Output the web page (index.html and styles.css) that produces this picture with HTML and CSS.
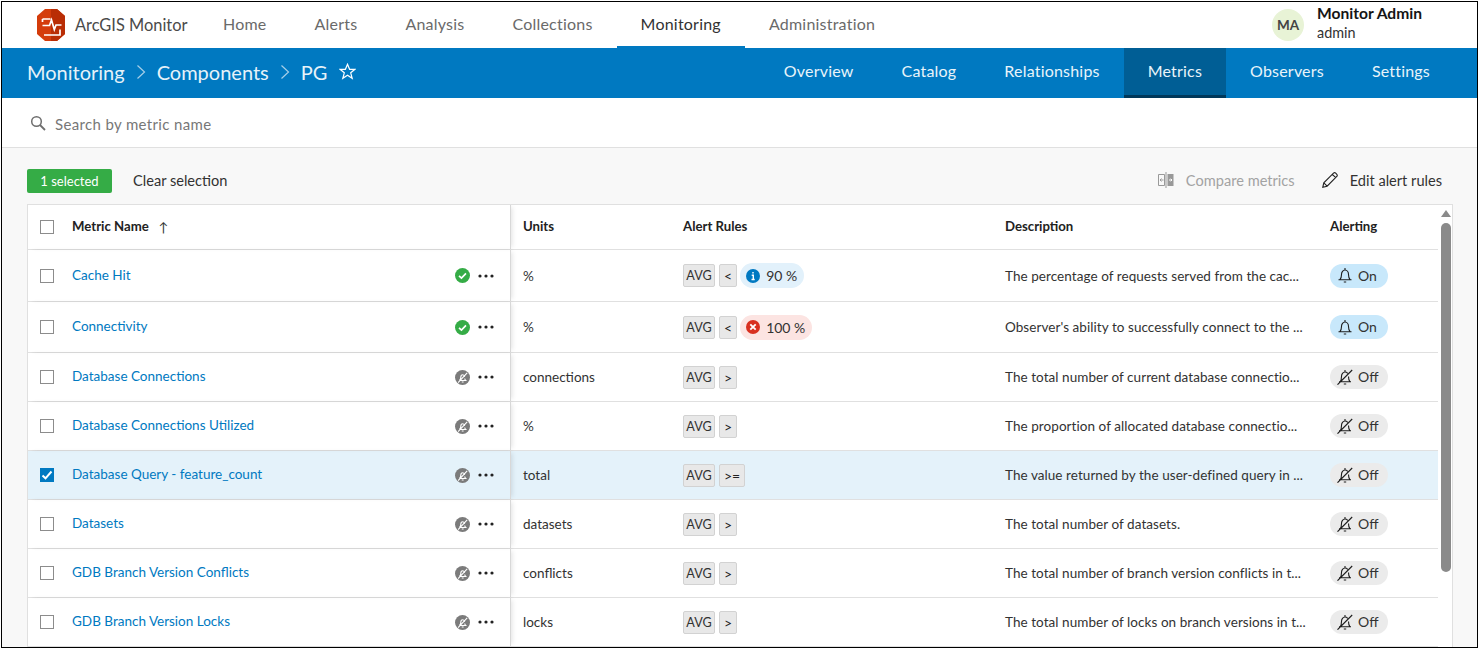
FILE: index.html
```html
<!DOCTYPE html>
<html lang="en">
<head>
<meta charset="utf-8">
<title>ArcGIS Monitor</title>
<link rel="stylesheet" href="styles.css">
</head>
<body>
<svg class="defs" width="0" height="0" aria-hidden="true">
  <symbol id="check" viewBox="0 0 16 16"><circle cx="8" cy="8" r="8" fill="#35ac46"/><path d="M4.3 8.300l2.600 2.500 4.800-5" fill="none" stroke="#fff" stroke-width="1.800"/></symbol>
  <symbol id="muted" viewBox="0 0 16 16"><circle cx="8" cy="8" r="8" fill="#7b7b7b"/><path d="M4.800 11.200c1-1 1.400-2 1.400-3.400 0-1.400.8-2.700 2-2.700s2 .9 2.100 2.200M10.400 9c.1.9.4 1.600 1 2.200H4.800M7.200 12.800h2M3.300 13.400L13 3" fill="none" stroke="#fff" stroke-width="1.200"/></symbol>
  <symbol id="more" viewBox="0 0 16 4"><circle cx="2" cy="2" r="1.600" fill="#222"/><circle cx="8" cy="2" r="1.600" fill="#222"/><circle cx="14" cy="2" r="1.600" fill="#222"/></symbol>
  <symbol id="bell" viewBox="0 0 16 16"><path d="M1.500 12.800h13M2.800 12.800c1.400-1.300 1.700-2.800 1.700-5.300C4.500 5 6 3 8 3s3.500 2 3.500 4.500c0 2.500.3 4 1.700 5.300M8 1V3M6.800 15h2.400" fill="none" stroke="#1c1c1c" stroke-width="1.100"/></symbol>
  <symbol id="bell-off" viewBox="0 0 16 16"><path d="M2 12.800h12M3 12.800c1.300-1.300 1.500-2.800 1.500-5.300C4.500 5 6 3 8 3c1.100 0 2 .5 2.700 1.300M11.500 7.500c0 2.500.3 4 1.500 5.300M8 1V3M6.800 15h2.400M.5 15.700L15.200 1" fill="none" stroke="#1c1c1c" stroke-width="1.100"/></symbol>
  <symbol id="tick" viewBox="0 0 14 14"><path d="M2.500 7.500l3 2.800 6-6.800" fill="none" stroke="#fff" stroke-width="2"/></symbol>
</svg>
<div class="frame">
  <header class="topbar">
    <a class="brand">
      <svg class="logo" width="28" height="32" viewBox="0 0 28 32"><path d="M8 0h12l8 7v18l-8 7H8l-8-7V7z" fill="#d43c0b"/><path d="M14 0h6l8 7v18l-8 7h-6z" fill="#b92d05"/><path d="M5.500 16.500h7l2-5.500 2.800 9.500 1.700-4.500h5.500M5.500 10h8M5.500 10v3M7 26h16v-5.500" fill="none" stroke="#fff" stroke-width="1.700"/></svg>
      <span>ArcGIS Monitor</span>
    </a>
    <nav class="mainnav">
      <a>Home</a><a>Alerts</a><a>Analysis</a><a>Collections</a><a class="active">Monitoring</a><a>Administration</a>
    </nav>
    <div class="user">
      <span class="avatar">MA</span>
      <span class="userinfo"><b>Monitor Admin</b><span>admin</span></span>
    </div>
  </header>

  <div class="bluebar">
    <div class="crumbs">
      <a>Monitoring</a><svg class="chev" width="10" height="16" viewBox="0 0 10 16"><path d="M1.500 1.500L8.500 8l-7 6.500" fill="none" stroke="#a6cfe8" stroke-width="1.200"/></svg>
      <a>Components</a><svg class="chev" width="10" height="16" viewBox="0 0 10 16"><path d="M1.500 1.500L8.500 8l-7 6.500" fill="none" stroke="#a6cfe8" stroke-width="1.200"/></svg>
      <a>PG</a>
      <svg class="star" width="17" height="17" viewBox="0 0 17 17"><path d="M8.500 1.300l2.100 5h5.300l-4.200 3.500 1.500 5.500-4.700-3-4.700 3 1.500-5.500L1.100 6.300h5.300z" fill="none" stroke="#fff" stroke-width="1.200"/></svg>
    </div>
    <nav class="subnav">
      <a>Overview</a><a>Catalog</a><a>Relationships</a><a class="active">Metrics</a><a>Observers</a><a>Settings</a>
    </nav>
  </div>

  <div class="searchbar">
    <svg width="16" height="16" viewBox="0 0 16 16"><circle cx="6.500" cy="6.500" r="4.800" fill="none" stroke="#6e6e6e" stroke-width="1.500"/><path d="M10 10l5 5" stroke="#6e6e6e" stroke-width="1.800"/></svg>
    <span>Search by metric name</span>
  </div>

  <main class="content">
    <div class="toolbar">
      <span class="selected">1 selected</span>
      <a class="clear">Clear selection</a>
      <a class="tool disabled">
        <svg width="16" height="16" viewBox="0 0 16 16"><path d="M.500 2.500h6v11h-6z" fill="none" stroke="#999"/><path d="M9.500 2h6v12h-6z" fill="#999"/><path d="M8 0v16" stroke="#999"/><path d="M2 8h3.500M2 8l1.500-1.500M2 8l1.500 1.500" fill="none" stroke="#999"/><path d="M11 8h3M14 8l-1.300-1.300M14 8l-1.300 1.300" fill="none" stroke="#fff"/></svg>
        <span>Compare metrics</span>
      </a>
      <a class="tool">
        <svg width="16" height="16" viewBox="0 0 16 16"><path d="M.800 15.200l1-4.400L11.500 1.100c.7-.6 1.600-.5 2.200.1l1.100 1.100c.6.700.6 1.500 0 2.200l-9.700 9.700zM1.800 10.800l3.400 3.400M10.300 2.300l3.400 3.400" fill="none" stroke="#222" stroke-width="1.100"/></svg>
        <span>Edit alert rules</span>
      </a>
    </div>

    <section class="table">
      <div class="rows">
        <div class="row head">
          <div class="name"><i class="box"></i><b>Metric Name</b><span class="sort">↑</span></div>
          <div class="cell"><b>Units</b></div>
          <div class="cell"><b>Alert Rules</b></div>
          <div class="cell"><b>Description</b></div>
          <div class="cell"><b>Alerting</b></div>
        </div>

        <div class="row tall">
          <div class="name"><i class="box"></i><a>Cache Hit</a><svg class="status"><use href="#check"/></svg><svg class="more"><use href="#more"/></svg></div>
          <div class="cell">%</div>
          <div class="cell rules"><span class="tag">AVG</span><span class="tag op">&lt;</span>
            <span class="level info"><svg width="14" height="14" viewBox="0 0 14 14"><circle cx="7" cy="7" r="7" fill="#0079c1"/><path d="M7 3v1.600M5.700 6.300H7.300V10.300M5.500 10.500h3.200" fill="none" stroke="#fff" stroke-width="1.400"/></svg>90 %</span></div>
          <div class="cell desc">The percentage of requests served from the cac...</div>
          <div class="cell"><span class="pill on"><svg><use href="#bell"/></svg>On</span></div>
        </div>

        <div class="row mid">
          <div class="name"><i class="box"></i><a>Connectivity</a><svg class="status"><use href="#check"/></svg><svg class="more"><use href="#more"/></svg></div>
          <div class="cell">%</div>
          <div class="cell rules"><span class="tag">AVG</span><span class="tag op">&lt;</span>
            <span class="level crit"><svg width="14" height="14" viewBox="0 0 14 14"><circle cx="7" cy="7" r="7" fill="#d83020"/><path d="M4.300 4.300l5.400 5.400M9.700 4.300l-5.400 5.400" fill="none" stroke="#fff" stroke-width="1.800"/></svg>100 %</span></div>
          <div class="cell desc">Observer's ability to successfully connect to the ...</div>
          <div class="cell"><span class="pill on"><svg><use href="#bell"/></svg>On</span></div>
        </div>

        <div class="row">
          <div class="name"><i class="box"></i><a>Database Connections</a><svg class="status"><use href="#muted"/></svg><svg class="more"><use href="#more"/></svg></div>
          <div class="cell">connections</div>
          <div class="cell rules"><span class="tag">AVG</span><span class="tag op">&gt;</span></div>
          <div class="cell desc">The total number of current database connectio...</div>
          <div class="cell"><span class="pill"><svg><use href="#bell-off"/></svg>Off</span></div>
        </div>

        <div class="row">
          <div class="name"><i class="box"></i><a>Database Connections Utilized</a><svg class="status"><use href="#muted"/></svg><svg class="more"><use href="#more"/></svg></div>
          <div class="cell">%</div>
          <div class="cell rules"><span class="tag">AVG</span><span class="tag op">&gt;</span></div>
          <div class="cell desc">The proportion of allocated database connectio...</div>
          <div class="cell"><span class="pill"><svg><use href="#bell-off"/></svg>Off</span></div>
        </div>

        <div class="row picked">
          <div class="name"><i class="box on"><svg width="14" height="14"><use href="#tick"/></svg></i><a>Database Query - feature_count</a><svg class="status"><use href="#muted"/></svg><svg class="more"><use href="#more"/></svg></div>
          <div class="cell">total</div>
          <div class="cell rules"><span class="tag">AVG</span><span class="tag op">&gt;=</span></div>
          <div class="cell desc">The value returned by the user-defined query in ...</div>
          <div class="cell"><span class="pill"><svg><use href="#bell-off"/></svg>Off</span></div>
        </div>

        <div class="row">
          <div class="name"><i class="box"></i><a>Datasets</a><svg class="status"><use href="#muted"/></svg><svg class="more"><use href="#more"/></svg></div>
          <div class="cell">datasets</div>
          <div class="cell rules"><span class="tag">AVG</span><span class="tag op">&gt;</span></div>
          <div class="cell desc">The total number of datasets.</div>
          <div class="cell"><span class="pill"><svg><use href="#bell-off"/></svg>Off</span></div>
        </div>

        <div class="row">
          <div class="name"><i class="box"></i><a>GDB Branch Version Conflicts</a><svg class="status"><use href="#muted"/></svg><svg class="more"><use href="#more"/></svg></div>
          <div class="cell">conflicts</div>
          <div class="cell rules"><span class="tag">AVG</span><span class="tag op">&gt;</span></div>
          <div class="cell desc">The total number of branch version conflicts in t...</div>
          <div class="cell"><span class="pill"><svg><use href="#bell-off"/></svg>Off</span></div>
        </div>

        <div class="row">
          <div class="name"><i class="box"></i><a>GDB Branch Version Locks</a><svg class="status"><use href="#muted"/></svg><svg class="more"><use href="#more"/></svg></div>
          <div class="cell">locks</div>
          <div class="cell rules"><span class="tag">AVG</span><span class="tag op">&gt;</span></div>
          <div class="cell desc">The total number of locks on branch versions in t...</div>
          <div class="cell"><span class="pill"><svg><use href="#bell-off"/></svg>Off</span></div>
        </div>
      </div>
      <aside class="scroll"><i class="arrow"></i><i class="thumb"></i></aside>
    </section>
  </main>
</div>
</body>
</html>
```
FILE: styles.css
```css
* { box-sizing: border-box; }
html, body { margin: 0; padding: 0; height: 100%; overflow: hidden; }
body { font-family: Lato, "Open Sans", "Liberation Sans", sans-serif; color: #323232; background: #fff; }
.defs { display: block; height: 0; }
a { color: inherit; text-decoration: none; }
.frame { height: 647px; margin: 1px 0 0 1px; border: 1px solid #000; display: flex; flex-direction: column; overflow: hidden; }

.topbar { height: 46px; flex: none; display: flex; align-items: stretch; background: #fff; }
.brand { display: flex; align-items: center; gap: 10px; margin-left: 35px; width: 162px; font-size: 16.4px; color: #4a4a4a; padding-bottom: 1px; white-space: nowrap; }
.logo { flex: none; }
.mainnav { display: flex; }
.mainnav a { display: flex; align-items: center; padding: 0 24px 2px; font-size: 16px; color: #6a6a6a; letter-spacing: .22px; height: 46px; border-bottom: 2px solid transparent; }
.mainnav a.active { color: #323232; border-bottom-color: #0079c1; }
.user { margin-left: auto; display: flex; align-items: center; gap: 13px; margin-right: 55px; }
.avatar { width: 32px; height: 32px; border-radius: 50%; background: #e8f3d6; font-size: 13.5px; font-weight: 700; color: #444; display: flex; align-items: center; justify-content: center; }
.userinfo { display: flex; flex-direction: column; font-size: 14.4px; line-height: 20px; margin-top: -5px; }
.userinfo b { font-size: 15.6px; color: #151515; }

.bluebar { height: 50px; flex: none; background: #0079c1; display: flex; justify-content: space-between; color: #fff; }
.crumbs { display: flex; align-items: center; margin-left: 25px; font-size: 20px; gap: 11px; color: #e6f2f9; padding-bottom: 3px; }
.star { margin-left: 1px; }
.subnav { display: flex; margin-right: 23px; }
.subnav a { display: flex; align-items: center; padding: 0 24px 5px; font-size: 16px; letter-spacing: .2px; color: #e9f4fa; }
.subnav a.active { background: #005e95; border-bottom: 3px solid #00385a; padding-bottom: 2px; }

.searchbar { height: 50px; flex: none; display: flex; align-items: center; gap: 9px; padding: 3px 0 0 28px; font-size: 15px; color: #777; border-bottom: 1px solid #e0e0e0; background: #fff; letter-spacing: .35px; }
.searchbar svg { margin-top: -3px; }

.content { flex: 1; min-height: 0; background: #f8f8f8; padding: 0 24px 0 25px; }
.toolbar { height: 56px; padding-top: 8px; display: flex; align-items: center; font-size: 14.6px; }
.selected { height: 24px; width: 85px; background: #35ac46; color: #fff; border-radius: 2px; font-size: 13px; display: flex; align-items: center; justify-content: center; margin-top: 2px; }
.clear { margin-left: 21px; color: #323232; }
.tool { display: flex; align-items: center; gap: 12px; color: #323232; margin-right: 11px; }
.tool.disabled { margin-left: auto; color: #a3a3a3; margin-right: 27px; }

.table { display: flex; height: 444px; background: #fff; border: 1px solid #e0e0e0; overflow: hidden; }
.rows { width: 1410px; flex: none; }
.row { display: grid; grid-template-columns: 483px 160px 322px 325px 120px; height: 49px; border-bottom: 1px solid #e0e0e0; font-size: 13.5px; background: #fff; }
.row.head { height: 45px; }
.row.tall { height: 52px; }
.row.mid { height: 51px; }
.row.picked { background: #e4f2fa; }
.name { display: flex; align-items: center; padding-left: 12px; border-right: 1px solid #d8d8d8; box-shadow: 3px 0 5px -2px rgba(0,0,0,.12); }
.cell { display: flex; align-items: center; padding-left: 12px; min-width: 0; color: #323232; white-space: nowrap; }
.name a { color: #0079c1; margin: 0 0 2px 18px; }
.name b, .cell b { font-size: 13.2px; color: #222; margin-bottom: 2px; }
.name b { margin-left: 18px; }
.sort { margin-left: 10px; font-size: 13px; color: #333; }
.box { width: 14px; height: 14px; flex: none; border: 1px solid #8c8c8c; background: #fff; display: block; }
.box.on { background: #0079c1; border-color: #0079c1; }
.box.on svg { display: block; margin: -1px; }
.status { width: 15px; height: 15px; margin-left: auto; flex: none; }
.more { width: 16px; height: 4px; margin: 0 16px 0 8px; flex: none; }
.rules { gap: 4px; }
.tag { height: 23px; min-width: 16px; padding: 0 4px; background: #e8e8e8; border: 1px solid #d2d2d2; border-radius: 2px; font-size: 12.6px; display: flex; align-items: center; justify-content: center; color: #323232; }
.tag:first-child { width: 32px; }
.tag.op { font-size: 14px; color: #222; }
.level { height: 25px; margin-left: -1px; border-radius: 13px; display: flex; align-items: center; gap: 6px; padding: 0 7px 0 6px; font-size: 14px; }
.level.info { background: #e2f1fb; }
.level.crit { background: #fce4e2; }
.desc { letter-spacing: .06px; }
.pill { width: 58px; height: 24px; border-radius: 12px; background: #ebebeb; display: flex; align-items: center; gap: 5px; padding: 0 0 1px 7px; font-size: 14px; }
.pill svg { width: 16px; height: 16px; flex: none; }
.pill.on { background: #c8e8fb; }

.scroll { flex: 1; position: relative; background: #fff; }
.arrow { position: absolute; left: 3px; top: 5px; width: 0; height: 0; border: 5px solid transparent; border-top-width: 0; border-bottom: 7px solid #8a8a8a; }
.thumb { position: absolute; left: 3px; top: 18px; width: 10px; height: 349px; border-radius: 5px; background: #8a8a8a; }
```
